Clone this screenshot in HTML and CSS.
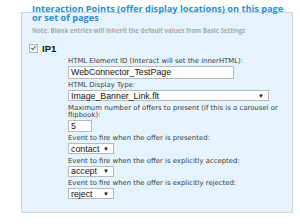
FILE: index.html
```html
<!DOCTYPE html>
<html>
<head>
<meta charset="utf-8">
<link rel="stylesheet" href="styles.css">
</head>
<body>
<div class="page">
  <section class="panel">
    <h2 class="title">Interaction Points (offer display locations) on this page or set of pages</h2>
    <p class="note">Note: Blank entries will inherit the default values from Basic Settings</p>
    <div class="ip-head">
      <span class="check" aria-hidden="true"><svg viewBox="0 0 8 8" width="8" height="8"><path d="M1.6 4.2 L3.2 5.8 L6.4 2" fill="none" stroke="#555" stroke-width="1.2"/></svg></span>
      <span class="ip-name">IP1</span>
    </div>
    <div class="fields">
      <div class="field">
        <label class="lbl">HTML Element ID (Interact will set the innerHTML):</label>
        <div class="txt wide">WebConnector_TestPage</div>
      </div>
      <div class="field">
        <label class="lbl">HTML Display Type:</label>
        <div class="sel full"><span>Image_Banner_Link.flt</span><span class="arrow">▼</span></div>
      </div>
      <div class="field">
        <label class="lbl">Maximum number of offers to present (if this is a carousel or flipbook):</label>
        <div class="txt small">5</div>
      </div>
      <div class="field">
        <label class="lbl">Event to fire when the offer is presented:</label>
        <div class="sel short"><span>contact</span><span class="arrow">▼</span></div>
      </div>
      <div class="field">
        <label class="lbl">Event to fire when the offer is explicitly accepted:</label>
        <div class="sel short"><span>accept</span><span class="arrow">▼</span></div>
      </div>
      <div class="field">
        <label class="lbl">Event to fire when the offer is explicitly rejected:</label>
        <div class="sel short"><span>reject</span><span class="arrow">▼</span></div>
      </div>
    </div>
  </section>
</div>
</body>
</html>
```
FILE: styles.css
```css
html, body {
  margin: 0;
  padding: 0;
  background: #ffffff;
}
.page {
  width: 300px;
  height: 224px;
  padding: 12px 7px 0 21px;
  box-sizing: border-box;
}
.panel {
  background: #e5f4fc;
  border: 1px solid #cdd5d9;
  height: 201px;
  box-sizing: border-box;
}
.title {
  margin: -9px 0 0 10px;
  font-family: "Open Sans", sans-serif;
  font-weight: 700;
  font-size: 9.2px;
  line-height: 9px;
  color: #2a8fc9;
  width: 258px;
}
.note {
  margin: 5px 0 0 10px;
  font-family: "Open Sans", sans-serif;
  font-weight: 700;
  font-size: 6.2px;
  line-height: 7px;
  color: #a4a8aa;
}
.ip-head {
  display: flex;
  align-items: center;
  margin: 9px 0 0 7px;
  gap: 4px;
  height: 10px;
}
.check {
  width: 7px;
  height: 7px;
  border: 1px solid #b5b5b5;
  background: #f2f2f2;
  display: flex;
  align-items: center;
  justify-content: center;
  overflow: hidden;
}
.ip-name {
  font-family: "Liberation Sans", Arial, sans-serif;
  font-weight: 700;
  font-size: 9.5px;
  color: #111;
}
.fields {
  margin: 4.5px 0 0 46px;
  width: 212px;
}
.field {
  margin-bottom: 3.5px;
}
.lbl {
  display: block;
  font-family: "DejaVu Sans", Verdana, sans-serif;
  font-size: 6.9px;
  line-height: 7px;
  color: #3a3a3a;
  padding-bottom: 1px;
}
.txt, .sel {
  background: #fff;
  border: 1px solid #b8b8b8;
  box-sizing: border-box;
  font-family: "Liberation Sans", Arial, sans-serif;
  font-size: 8.8px;
  color: #111;
  padding: 0 2px;
  display: flex;
  align-items: center;
}
.txt.wide {
  width: 166px;
  height: 13px;
}
.txt.small {
  width: 24px;
  height: 12px;
}
.sel {
  height: 11px;
  justify-content: space-between;
}
.sel.full { width: 201px; }
.sel.short { width: 46px; }
.arrow {
  font-size: 6px;
  color: #111;
  padding-right: 2px;
}
```
